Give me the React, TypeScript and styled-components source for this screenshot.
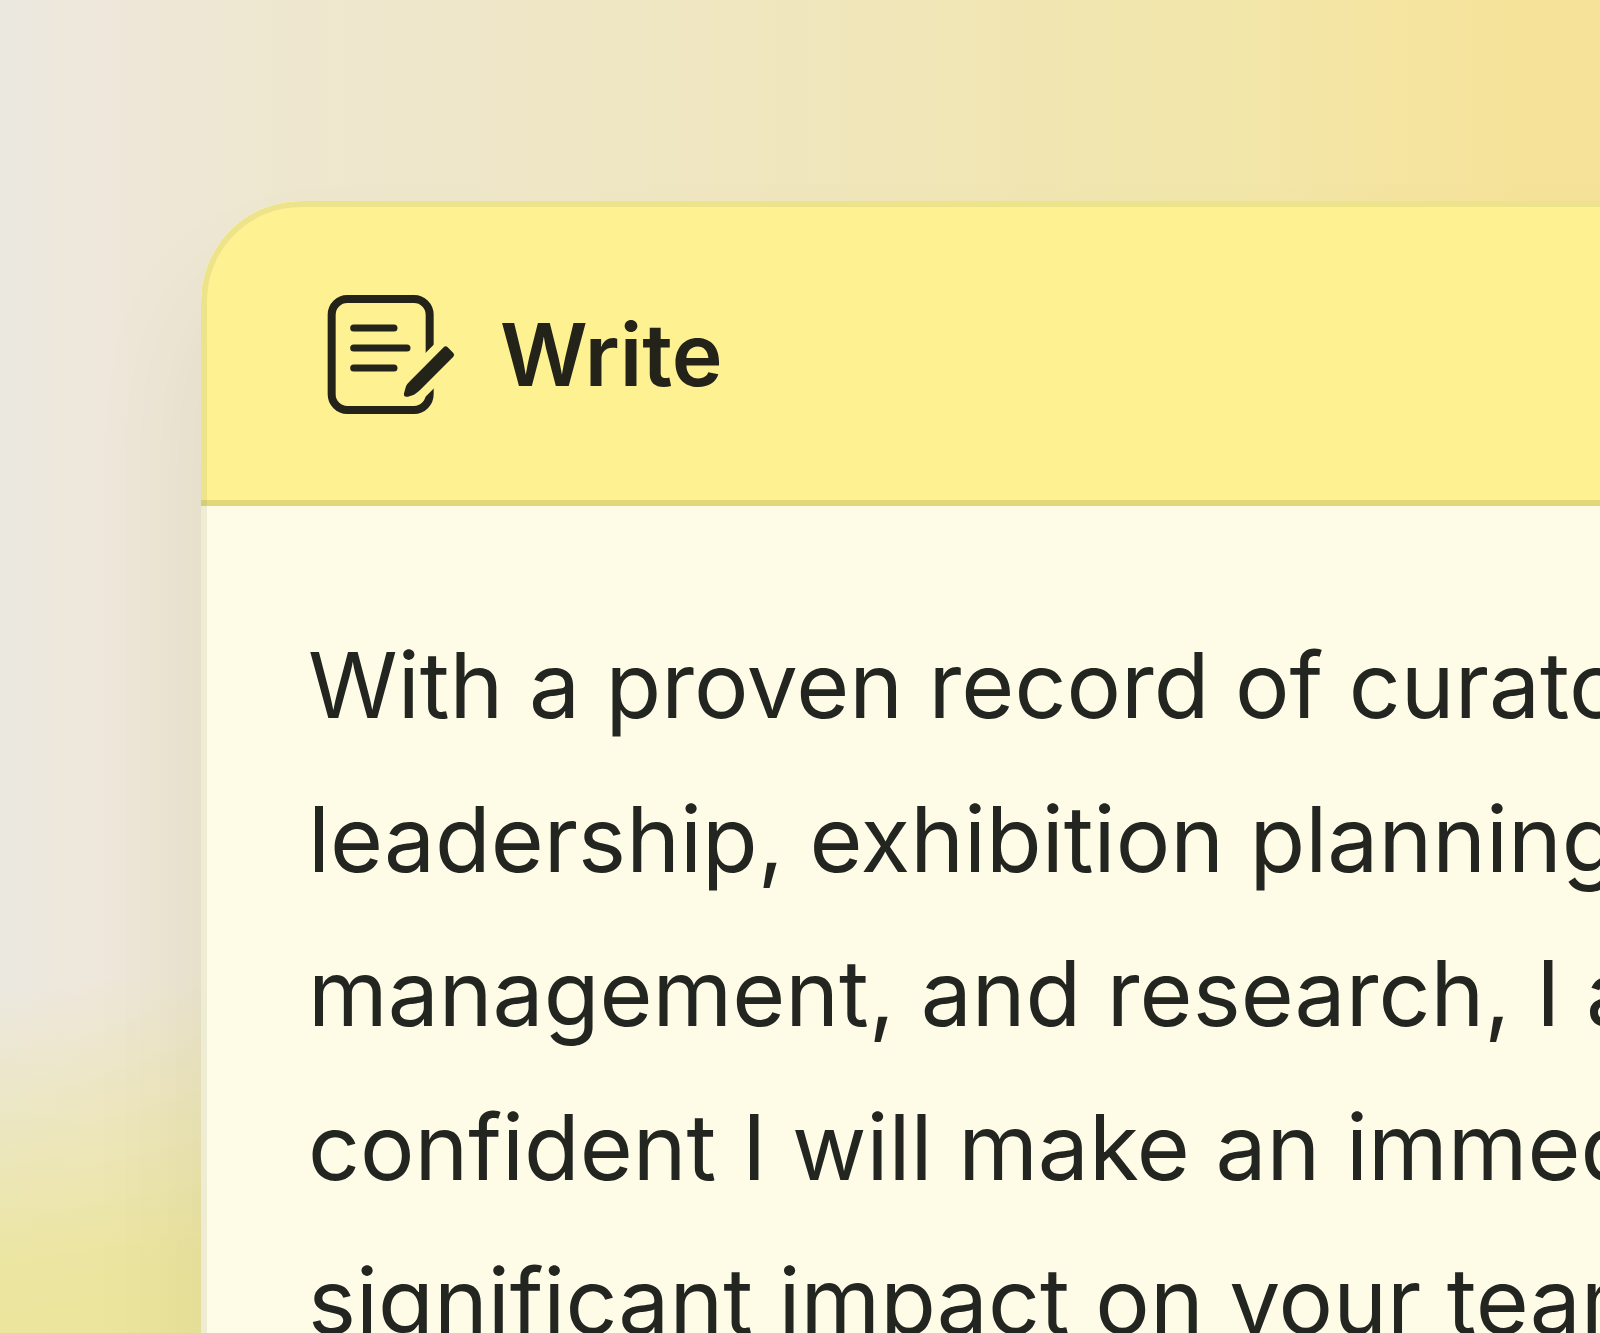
import React from "react";
import styled, { createGlobalStyle } from "styled-components";

const GlobalStyle = createGlobalStyle`
  *, *::before, *::after {
    box-sizing: border-box;
  }

  body {
    margin: 0;
    font-family: Inter, "Liberation Sans", sans-serif;
  }
`;

const Stage = styled.main`
  height: 100vh;
  overflow: hidden;
  padding: 201px 0 0 201px;
  background:
    linear-gradient(174deg, rgba(236, 229, 156, 0) 66%, rgba(236, 229, 156, 0.4) 74%, rgba(236, 229, 156, 0.9) 84%, rgb(236, 229, 154) 92%),
    linear-gradient(90deg, #ebe8df 0%, #eee7dc 5%, #eee7cf 18%, #f0e6c0 46%, #f2e6aa 76%, #f6e399 96%);
`;

const Card = styled.article`
  width: 125%;
  min-height: 125%;
  border-radius: 100px;
  overflow: hidden;
  background: #fefce6;
  box-shadow: 0 80px 120px rgba(70, 65, 30, 0.08);
  position: relative;

  &::after {
    content: "";
    position: absolute;
    inset: 0;
    border: 6px solid rgba(130, 140, 90, 0.13);
    border-radius: inherit;
    pointer-events: none;
  }
`;

const CardHeader = styled.header`
  display: flex;
  align-items: center;
  gap: 44px;
  height: 305px;
  padding: 8px 125px 0;
  background: #fdf192;
  border-bottom: 6px solid #e2d87a;
  color: #24231a;
`;

const Title = styled.h1`
  margin: 0;
  font-size: 86px;
  font-weight: 600;
  line-height: 100px;
`;

const Letter = styled.p`
  margin: 0;
  padding: 102px 107px;
  font-size: 91px;
  line-height: 154px;
  color: #232520;
`;

const Line = styled.span`
  display: block;
  white-space: nowrap;
`;

const Icon = styled.svg`
  display: block;
  width: 130px;
  height: 121px;
`;

function WriteIcon() {
  return (
    <Icon viewBox="48 39 390 363" fill="none" stroke="currentColor" aria-hidden="true">
      <mask id="pen-gap" maskUnits="userSpaceOnUse" x="0" y="0" width="480" height="450">
        <rect width="480" height="450" fill="#fff" stroke="none" />
        <path d="M310 318 440 188" stroke="#000" strokeWidth="93" />
      </mask>
      <rect x="65" y="54" width="294" height="333" rx="47" strokeWidth="24" mask="url(#pen-gap)" />
      <path d="M131 141H252M131 201H291M131 261H252" strokeWidth="21" strokeLinecap="round" />
      <path
        d="M401 199Q407 193 413 199L430 216Q435 221 430 227L331 326Q323 334 312 341L294 347Q280 350 282 337L288 316Q292 307 301 299Z"
        fill="currentColor"
        stroke="none"
      />
    </Icon>
  );
}

const lines = [
  "With a proven record of curatorial",
  "leadership, exhibition planning,",
  "management, and research, I am",
  "confident I will make an immediate,",
  "significant impact on your team.",
];

export default function App() {
  return (
    <>
      <GlobalStyle />
      <Stage>
        <Card>
          <CardHeader>
            <WriteIcon />
            <Title>Write</Title>
          </CardHeader>
          <Letter>
            {lines.map((line) => (
              <Line key={line}>{line} </Line>
            ))}
          </Letter>
        </Card>
      </Stage>
    </>
  );
}
